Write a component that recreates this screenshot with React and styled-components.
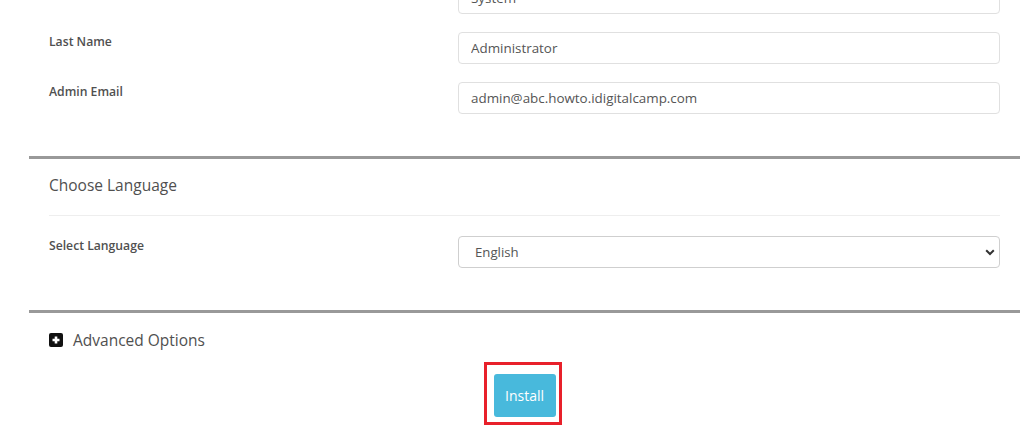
import React from "react";
import styled, { createGlobalStyle } from "styled-components";

const Global = createGlobalStyle`
  html, body { margin: 0; padding: 0; background: #fff; overflow: hidden; }
  body { font-family: "Open Sans", "Liberation Sans", sans-serif; color: #555; }
  * { box-sizing: border-box; }
`;

const Page = styled.div`
  margin: -18px 4px 0 29px;
  height: 446px;
`;

const Section = styled.section`
  border-top: ${(p) => (p.$ruled ? "3px solid #999" : "none")};
  padding: ${(p) => p.$pad || "0 20px 42px"};
`;

const SectionHead = styled.h3`
  margin: 0;
  padding: 15px 0 19px;
  font-size: 15.5px;
  font-weight: 400;
  line-height: 22px;
  color: #505050;
  border-bottom: 1px solid #eee;
`;

const Rows = styled.div`
  display: flex;
  flex-direction: column;
  gap: 18px;
  margin-top: ${(p) => p.$top || "0"};
`;

const Row = styled.div`
  display: grid;
  grid-template-columns: 409px 1fr;
  align-items: start;
`;

const Label = styled.label`
  padding-top: 1px;
  font-size: 12.2px;
  font-weight: 560;
  line-height: 17px;
  color: #505050;
`;

const Input = styled.input`
  width: 100%;
  height: 32px;
  padding: 0 12px;
  border: 1px solid #e0e0e0;
  border-radius: 4px;
  font-family: inherit;
  font-size: 13.4px;
  color: #555;
  background: #fff;
  outline: none;
`;

const SelectWrap = styled.div`
  position: relative;
`;

const Select = styled.select`
  width: 100%;
  height: 32px;
  padding: 0 30px 0 16px;
  border: 1px solid #cfcfcf;
  border-radius: 4px;
  font-family: inherit;
  font-size: 13.2px;
  color: #555;
  background: #fff;
  appearance: none;
  -webkit-appearance: none;
  outline: none;
`;

const Chevron = styled.svg`
  position: absolute;
  right: 5px;
  top: 13px;
  width: 10px;
  height: 7px;
  pointer-events: none;
`;

const Toggle = styled.div`
  display: flex;
  align-items: center;
  gap: 10px;
  font-size: 15.5px;
  line-height: 22px;
  color: #505050;
  margin-top: -1px;
`;

const PlusBox = styled.span`
  width: 14px;
  height: 14px;
  border-radius: 2px;
  background: #111;
  display: inline-flex;
  align-items: center;
  justify-content: center;
`;

const Actions = styled.div`
  display: flex;
  justify-content: center;
  margin-top: 11px;
  padding-right: 4px;
`;

const Highlight = styled.div`
  border: 3px solid #e8202a;
  padding: 9px 3px 5px 7px;
`;

const Button = styled.button`
  width: 62px;
  height: 43px;
  border: none;
  border-radius: 3px;
  background: #48b9dc;
  color: #fff;
  font-family: inherit;
  font-size: 14px;
  padding: 0;
  cursor: pointer;
`;

const fields = [
  { label: "", value: "System" },
  { label: "Last Name", value: "Administrator" },
  { label: "Admin Email", value: "admin@abc.howto.idigitalcamp.com" },
];

export default function App() {
  return (
    <>
      <Global />
      <Page>
        <Section>
          <Rows>
            {fields.map((f) => (
              <Row key={f.value}>
                <Label>{f.label}</Label>
                <Input defaultValue={f.value} />
              </Row>
            ))}
          </Rows>
        </Section>
        <Section $ruled>
          <SectionHead>Choose Language</SectionHead>
          <Rows $top="20px">
            <Row>
              <Label>Select Language</Label>
              <SelectWrap>
                <Select defaultValue="English">
                  <option>English</option>
                </Select>
                <Chevron viewBox="0 0 10 7">
                  <path d="M1.2 1.3 L5 5 L8.8 1.3" fill="none" stroke="#333" strokeWidth="2" />
                </Chevron>
              </SelectWrap>
            </Row>
          </Rows>
        </Section>
        <Section $ruled $pad="17px 20px 0">
          <Toggle>
            <PlusBox>
              <svg width="10" height="10" viewBox="0 0 10 10">
                <path d="M5 1.5 V8.5 M1.5 5 H8.5" stroke="#fff" strokeWidth="2.6" />
              </svg>
            </PlusBox>
            Advanced Options
          </Toggle>
          <Actions>
            <Highlight>
              <Button>Install</Button>
            </Highlight>
          </Actions>
        </Section>
      </Page>
    </>
  );
}
